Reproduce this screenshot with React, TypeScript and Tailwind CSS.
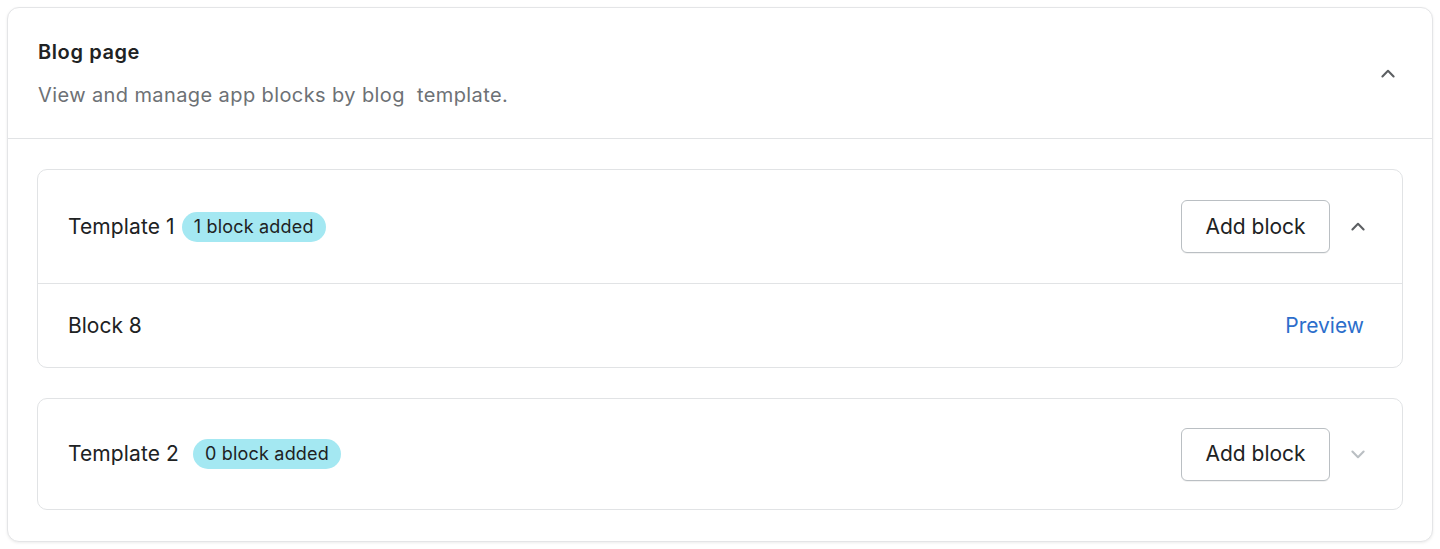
import React from "react";

function ChevronUp({ className }: { className?: string }) {
  return (
    <svg viewBox="0 0 20 20" className={className} fill="currentColor">
      <path d="M14.53 12.28a.75.75 0 0 1-1.06 0L10 8.81l-3.47 3.47a.75.75 0 0 1-1.06-1.06l4-4a.75.75 0 0 1 1.06 0l4 4a.75.75 0 0 1 0 1.06Z" />
    </svg>
  );
}

function ChevronDown({ className }: { className?: string }) {
  return (
    <svg viewBox="0 0 20 20" className={className} fill="currentColor">
      <path d="M5.47 7.72a.75.75 0 0 1 1.06 0L10 11.19l3.47-3.47a.75.75 0 1 1 1.06 1.06l-4 4a.75.75 0 0 1-1.06 0l-4-4a.75.75 0 0 1 0-1.06Z" />
    </svg>
  );
}

interface TemplateCardProps {
  name: string;
  count: number;
  open: boolean;
  blocks: string[];
  badgeGap: string;
  headerHeight: string;
}

function TemplateCard({ name, count, open, blocks, badgeGap, headerHeight }: TemplateCardProps) {
  return (
    <div className="rounded-[10px] border border-[#e1e3e5] bg-white">
      <div className={`flex items-center justify-between pl-[30px] pr-[30px] ${headerHeight}`}>
        <div className={`flex items-center ${badgeGap}`}>
          <span className="text-[21px] tracking-[0.1px] text-[#202223]">{name}</span>
          <span className="rounded-full bg-[#a4e8f2] px-[12px] py-[3px] text-[18px] leading-[24px] tracking-[0.2px] text-[#202223]">
            {count} block added
          </span>
        </div>
        <div className="flex items-center gap-[14px]">
          <button className="h-[53px] w-[149px] rounded-[6px] border border-[#babfc3] bg-white text-[21px] text-[#202223] shadow-[0_1px_0_rgba(0,0,0,0.05)]">
            Add block
          </button>
          {open ? (
            <ChevronUp className="h-[28px] w-[28px] text-[#5c5f62]" />
          ) : (
            <ChevronDown className="h-[28px] w-[28px] text-[#babfc3]" />
          )}
        </div>
      </div>
      {open &&
        blocks.map((b) => (
          <div
            key={b}
            className="flex h-[84px] items-center justify-between border-t border-[#e1e3e5] pl-[30px] pr-[38px]"
          >
            <span className="text-[21px] text-[#202223]">{b}</span>
            <a href="#" className="text-[21px] text-[#2c6ecb]">
              Preview
            </a>
          </div>
        ))}
    </div>
  );
}

export default function App() {
  return (
    <div className="min-h-[549px] bg-white p-[7px] font-['Inter',sans-serif]">
      <div className="rounded-[12px] border border-[#e4e5e7] bg-white shadow-[0_1px_3px_rgba(0,0,0,0.08)]">
        <div className="flex items-center justify-between border-b border-[#e1e3e5] pb-[29px] pl-[30px] pr-[30px] pt-[30px]">
          <div>
            <h2 className="text-[20px] font-semibold leading-[28px] tracking-[0.6px] text-[#202223]">Blog page</h2>
            <p className="mt-[15px] text-[20px] leading-[28px] tracking-[0.4px] text-[#6d7175]">
              View and manage app blocks by blog&nbsp; template.
            </p>
          </div>
          <ChevronUp className="h-[28px] w-[28px] text-[#5c5f62]" />
        </div>
        <div className="flex flex-col gap-[30px] px-[29px] pb-[31px] pt-[30px]">
          <TemplateCard
            name="Template 1"
            count={1}
            open
            blocks={["Block 8"]}
            badgeGap="gap-[7px]"
            headerHeight="h-[113px]"
          />
          <TemplateCard
            name="Template 2"
            count={0}
            open={false}
            blocks={[]}
            badgeGap="gap-[14px]"
            headerHeight="h-[110px]"
          />
        </div>
      </div>
    </div>
  );
}
